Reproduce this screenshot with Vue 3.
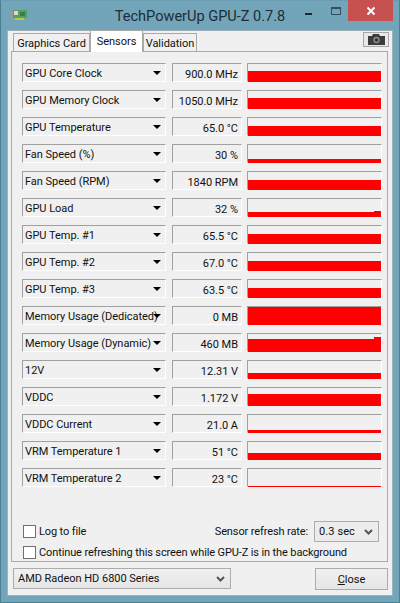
<script setup>
const rows = [
  { name: 'GPU Core Clock', value: '900.0 MHz', h: 11 },
  { name: 'GPU Memory Clock', value: '1050.0 MHz', h: 11 },
  { name: 'GPU Temperature', value: '65.0 °C', h: 10 },
  { name: 'Fan Speed (%)', value: '30 %', h: 4 },
  { name: 'Fan Speed (RPM)', value: '1840 RPM', h: 10 },
  { name: 'GPU Load', value: '32 %', h: 5, bump: 6 },
  { name: 'GPU Temp. #1', value: '65.5 °C', h: 10 },
  { name: 'GPU Temp. #2', value: '67.0 °C', h: 10 },
  { name: 'GPU Temp. #3', value: '63.5 °C', h: 10 },
  { name: 'Memory Usage (Dedicated)', value: '0 MB', h: 18 },
  { name: 'Memory Usage (Dynamic)', value: '460 MB', h: 13, bump: 15 },
  { name: '12V', value: '12.31 V', h: 6 },
  { name: 'VDDC', value: '1.172 V', h: 12 },
  { name: 'VDDC Current', value: '21.0 A', h: 3 },
  { name: 'VRM Temperature 1', value: '51 °C', h: 7 },
  { name: 'VRM Temperature 2', value: '23 °C', h: 1 }
]
const tabs = ['Graphics Card', 'Sensors', 'Validation']
</script>

<template>
  <div class="window">
    <header class="titlebar">
      <svg class="app-icon" width="16" height="14" viewBox="0 0 16 14">
        <rect x="0" y="1" width="2" height="12" fill="#9a9a9a" />
        <rect x="2" y="2" width="14" height="8" fill="#55a060" />
        <rect x="3" y="3" width="4" height="4" fill="#e0d8c8" />
        <rect x="9" y="4" width="5" height="4" fill="#2f7f4f" />
        <rect x="4" y="10" width="9" height="2" fill="#b8c840" />
      </svg>
      <div class="title">TechPowerUp GPU-Z 0.7.8</div>
      <div class="controls">
        <span class="min"></span>
        <span class="max"></span>
        <span class="close-x">
          <svg width="10" height="10" viewBox="0 0 10 10"><path d="M1.5 1.5 L8.5 8.5 M8.5 1.5 L1.5 8.5" stroke="#fff" stroke-width="2" /></svg>
        </span>
      </div>
    </header>

    <div class="client">
      <div class="tabstrip">
        <div v-for="t in tabs" :key="t" class="tab" :class="{ active: t === 'Sensors' }">{{ t }}</div>
        <div class="spacer"></div>
        <button class="camera">
          <svg width="17" height="11" viewBox="0 0 17 11">
            <path d="M0 2 H4 L5 0 H11 L12 2 H17 V11 H0 Z" fill="#3c3c3c" />
            <circle cx="8.5" cy="6" r="3.2" fill="#8d8d8d" />
            <circle cx="8.5" cy="6" r="1.8" fill="#333" />
          </svg>
        </button>
      </div>

      <section class="panel">
        <div class="rows">
          <div v-for="r in rows" :key="r.name" class="row">
            <div class="field name">
              <span class="name-text">{{ r.name }}</span>
              <span class="tri"></span>
            </div>
            <div class="field value">{{ r.value }}</div>
            <div class="field graph">
              <div class="bar" :style="{ height: r.h + 'px' }"></div>
              <div v-if="r.bump" class="bump" :style="{ height: r.bump + 'px' }"></div>
            </div>
          </div>
        </div>

        <div class="options">
          <div class="opt-line">
            <label class="check"><span class="box"></span>Log to file</label>
            <div class="rate">
              <span>Sensor refresh rate:</span>
              <div class="select small">
                <span>0.3 sec</span>
                <svg width="9" height="6" viewBox="0 0 9 6"><path d="M1 1 L4.5 4.5 L8 1" fill="none" stroke="#555" stroke-width="2" /></svg>
              </div>
            </div>
          </div>
          <label class="check"><span class="box"></span>Continue refreshing this screen while GPU-Z is in the background</label>
        </div>
      </section>

      <footer class="bottom">
        <div class="select large">
          <span>AMD Radeon HD 6800 Series</span>
          <svg width="9" height="6" viewBox="0 0 9 6"><path d="M1 1 L4.5 4.5 L8 1" fill="none" stroke="#555" stroke-width="2" /></svg>
        </div>
        <button class="close-btn"><u>C</u>lose</button>
      </footer>
    </div>
  </div>
</template>

<style>
html, body { margin: 0; background: #6fa3b8; }
</style>

<style scoped>
.window {
  box-sizing: border-box;
  width: 400px;
  height: 603px;
  background: #72a5b9;
  border: 1px solid #4d7f93;
  border-top-color: #6a9db2;
  padding: 0 6px 6px;
  display: flex;
  flex-direction: column;
  font-family: Roboto, "Liberation Sans", sans-serif;
  font-size: 11px;
  letter-spacing: -0.03px;
  color: #111;
}
.titlebar {
  height: 29px;
  flex: none;
  display: flex;
  align-items: flex-start;
  position: relative;
}
.app-icon { margin: 7px 0 0 4px; flex: none; }
.title {
  flex: 1;
  text-align: center;
  font-size: 14.6px;
  line-height: 20px;
  margin-top: 5px;
  color: #1f2d36;
  padding-right: 20px;
}
.controls { position: absolute; top: -1px; right: 0; display: flex; align-items: flex-start; }
.min { width: 7px; height: 2px; background: #1c2a30; margin-top: 13px; margin-right: 19px; }
.max { width: 8px; height: 5px; border: 1px solid #32505e; border-top-width: 2px; margin-top: 7px; margin-right: 7px; }
.close-x {
  width: 45px;
  height: 21px;
  background: #c75050;
  display: flex;
  align-items: center;
  justify-content: center;
}
.client {
  flex: 1;
  min-height: 0;
  background: #f0f0f0;
  border: 1px solid #9fb0b8;
  display: flex;
  flex-direction: column;
  padding: 0 4px 0 3px;
}
.tabstrip {
  height: 20px;
  flex: none;
  display: flex;
  align-items: flex-end;
  padding-left: 2px;
  position: relative;
  z-index: 1;
}
.tab {
  box-sizing: border-box;
  height: 18px;
  line-height: 20px;
  text-align: center;
  background: #f0f0f0;
  border: 1px solid #a9a9a9;
  border-bottom: none;
  white-space: nowrap;
}
.tab:nth-child(1) { width: 77px; }
.tab:nth-child(2) { width: 53px; }
.tab:nth-child(3) { width: 54px; }
.tab.active {
  height: 22px;
  margin-bottom: -1px;
  background: #fff;
  line-height: 21px;
}
.spacer { flex: 1; }
.camera {
  box-sizing: border-box;
  width: 26px;
  height: 15px;
  padding: 0;
  margin: 0 -1px 4px 0;
  background: #e9e9e9;
  border: 1px solid #a8a8a8;
  display: flex;
  align-items: center;
  justify-content: center;
}
.panel {
  box-sizing: border-box;
  height: 511px;
  flex: none;
  background: #f0f0f0;
  border: 1px solid #a9a9a9;
  padding: 11px 5px 0 10px;
  display: flex;
  flex-direction: column;
}
.rows { display: flex; flex-direction: column; gap: 8px; }
.row { display: flex; height: 19px; }
.field {
  box-sizing: border-box;
  height: 19px;
  border: 1px solid #fff;
  border-top-color: #a0a0a0;
  border-left-color: #a0a0a0;
  background: #f0f0f0;
  line-height: 21px;
}
.name { width: 144px; display: flex; align-items: center; padding: 2px 0 0 2px; position: relative; }
.name-text { white-space: nowrap; line-height: 19px; }
.tri {
  position: absolute;
  right: 4px;
  top: 7px;
  border-left: 4px solid transparent;
  border-right: 4px solid transparent;
  border-top: 4px solid #000;
}
.value { width: 70px; margin: 0 5px 0 6px; text-align: right; padding-right: 3px; white-space: nowrap; }
.graph { width: 135px; position: relative; }
.bar { background: #f00; position: absolute; left: 0; right: 0; bottom: -1px; }
.bump { background: #f00; position: absolute; width: 7px; right: 0; bottom: -1px; }
.options { margin-top: 34px; display: flex; flex-direction: column; letter-spacing: -0.12px; }
.opt-line { display: flex; justify-content: space-between; align-items: flex-start; height: 22px; padding-right: 3px; }
.opt-line .check { padding-top: 4px; }
.check { display: flex; align-items: center; gap: 3px; white-space: nowrap; }
.options > .check { height: 18px; }
.box {
  box-sizing: border-box;
  width: 13px;
  height: 13px;
  margin-left: 1px;
  background: #fff;
  border: 1px solid #707070;
  flex: none;
}
.rate { display: flex; align-items: center; gap: 6px; }
.select {
  box-sizing: border-box;
  display: flex;
  align-items: center;
  justify-content: space-between;
  border: 1px solid #acacac;
  background: #ececec;
  padding: 0 5px 0 4px;
}
.select.small { width: 65px; height: 21px; letter-spacing: 0.1px; }
.select.large { width: 218px; height: 21px; background: linear-gradient(#f0f0f0, #e5e5e5); }
.bottom {
  flex: 1;
  display: flex;
  justify-content: space-between;
  align-items: flex-start;
  padding: 6px 0 0 2px;
}
.close-btn {
  box-sizing: border-box;
  width: 73px;
  height: 22px;
  padding: 0;
  font: inherit;
  color: inherit;
  background: linear-gradient(#f0f0f0, #e5e5e5);
  border: 1px solid #acacac;
}
</style>
